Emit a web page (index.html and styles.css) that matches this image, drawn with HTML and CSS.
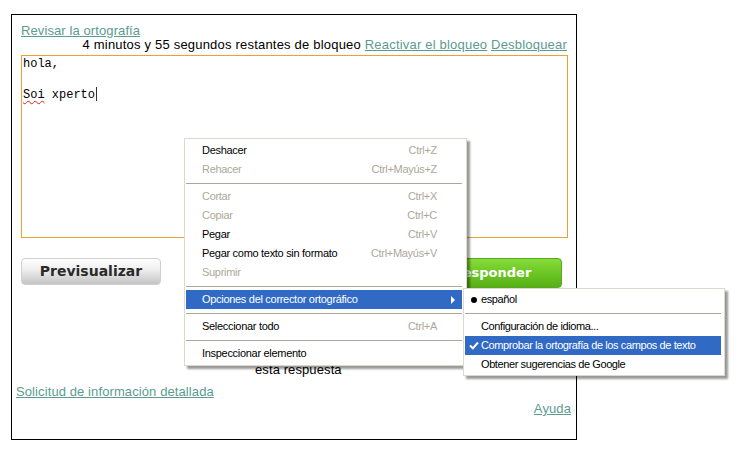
FILE: index.html
```html
<!DOCTYPE html>
<html lang="es">
<head>
<meta charset="utf-8">
<title>Responder</title>
<link rel="stylesheet" href="styles.css">
</head>
<body>
<div class="frame">
  <div class="row1"><a class="lnk" href="#">Revisar la ortografía</a></div>
  <div class="row2">4 minutos y 55 segundos restantes de bloqueo <a class="lnk" href="#">Reactivar el bloqueo</a> <a class="lnk" href="#">Desbloquear</a></div>
  <div class="textarea"><div>hola,</div><div>&nbsp;</div><div><span class="misspelled">Soi</span> xperto<span class="caret"></span></div></div>
  <div class="buttons">
    <div class="btn btn-gray">Previsualizar</div>
    <div class="btn btn-green">Responder</div>
  </div>
  <div class="note">esta respuesta</div>
  <div class="row-sol"><a class="lnk" href="#">Solicitud de información detallada</a></div>
  <div class="row-help"><a class="lnk" href="#">Ayuda</a></div>
</div>

<div class="menu main-menu">
  <div class="item"><span>Deshacer</span><span class="sc">Ctrl+Z</span></div>
  <div class="item dis"><span>Rehacer</span><span class="sc">Ctrl+Mayús+Z</span></div>
  <div class="sep"></div>
  <div class="item dis"><span>Cortar</span><span class="sc">Ctrl+X</span></div>
  <div class="item dis"><span>Copiar</span><span class="sc">Ctrl+C</span></div>
  <div class="item"><span>Pegar</span><span class="sc">Ctrl+V</span></div>
  <div class="item"><span>Pegar como texto sin formato</span><span class="sc">Ctrl+Mayús+V</span></div>
  <div class="item dis"><span>Suprimir</span></div>
  <div class="sep"></div>
  <div class="item hl"><span>Opciones del corrector ortográfico</span><span class="arrow"></span></div>
  <div class="sep"></div>
  <div class="item"><span>Seleccionar todo</span><span class="sc">Ctrl+A</span></div>
  <div class="sep"></div>
  <div class="item"><span>Inspeccionar elemento</span></div>
</div>

<div class="menu sub-menu">
  <div class="item"><span class="mark"><span class="dot"></span></span><span>español</span></div>
  <div class="sep"></div>
  <div class="item"><span class="mark"></span><span>Configuración de idioma...</span></div>
  <div class="item hl"><span class="mark"><svg width="10" height="9" viewBox="0 0 10 9"><path d="M1 4.5 L3.8 7.3 L9 1.5" fill="none" stroke="#fff" stroke-width="2"/></svg></span><span>Comprobar la ortografía de los campos de texto</span></div>
  <div class="item"><span class="mark"></span><span>Obtener sugerencias de Google</span></div>
</div>
</body>
</html>
```

FILE: styles.css
```css
html, body {
  margin: 0;
  padding: 0;
  background: #fff;
}
body {
  font-family: "Liberation Sans", Arial, sans-serif;
  font-size: 13px;
  letter-spacing: 0.1px;
  color: #000;
  width: 740px;
  height: 454px;
  overflow: hidden;
  position: relative;
}
.frame {
  margin: 14px 0 0 11px;
  width: 566px;
  height: 426px;
  box-sizing: border-box;
  border: 1px solid #000;
  padding: 9px 8px 0 9px;
}
.lnk {
  color: #5b9b91;
  text-decoration: underline;
}
.row1, .row2 {
  line-height: 14px;
  height: 14px;
}
.row2 {
  text-align: right;
  padding-right: 1px;
  letter-spacing: 0.2px;
}
.textarea {
  margin-top: 3px;
  height: 183px;
  box-sizing: border-box;
  border: 1px solid #f0a030;
  padding: 1px;
  font-family: "Liberation Mono", "Courier New", monospace;
  font-size: 12px;
  line-height: 15px;
  letter-spacing: 0;
}
.misspelled {
  text-decoration: underline wavy #e02020;
  text-decoration-thickness: 1px;
  text-underline-offset: 2px;
}
.caret {
  display: inline-block;
  width: 1px;
  height: 14px;
  background: #333;
  vertical-align: -3px;
  margin-left: 1px;
}
.buttons {
  margin-top: 20px;
  display: flex;
  justify-content: space-between;
  padding-right: 6px;
}
.btn {
  width: 140px;
  box-sizing: border-box;
  border-radius: 4px;
  font-family: "DejaVu Sans", Verdana, sans-serif;
  font-weight: bold;
  text-align: center;
  letter-spacing: 0;
}
.btn-gray {
  height: 27px;
  line-height: 25px;
  font-size: 14px;
  color: #2a2a2a;
  border: 1px solid #d0d0d0;
  background: linear-gradient(#ffffff, #f0f0f0 40%, #c4c4c4);
}
.btn-green {
  height: 30px;
  line-height: 28px;
  font-size: 13px;
  color: #fff;
  border: 1px solid #5aa81e;
  background: linear-gradient(#86dc3a, #6cc625 50%, #58b016);
}
.note {
  margin-top: 75px;
  padding-left: 234px;
  line-height: 14px;
}
.row-sol {
  margin-top: 8px;
  margin-left: -5px;
  line-height: 14px;
}
.row-help {
  margin-top: 3px;
  margin-right: -3px;
  text-align: right;
  line-height: 14px;
}

/* context menus */
.menu {
  position: absolute;
  background: #fff;
  border: 1px solid #ddd9cc;
  box-shadow: 3px 3px 2px rgba(0, 0, 0, 0.4);
  font-family: "Liberation Sans", Tahoma, sans-serif;
  font-size: 11px;
  letter-spacing: -0.3px;
  box-sizing: border-box;
}
.main-menu {
  left: 184px;
  top: 138px;
  width: 283px;
  padding: 2px 4px 2px 1px;
}
.sub-menu {
  left: 463px;
  top: 288px;
  width: 262px;
  padding: 1px 3px 1px 1px;
  letter-spacing: -0.4px;
}
.item {
  height: 19px;
  line-height: 19px;
  display: flex;
  justify-content: space-between;
  align-items: center;
  padding: 0 25px 0 16px;
  white-space: nowrap;
}
.sub-menu .item {
  justify-content: flex-start;
  padding: 0 4px 0 1px;
}
.item.dis {
  color: #aca899;
}
.sc {
  color: #aca899;
}
.item.hl {
  background: #316ac5;
  color: #fff;
}
.main-menu .item.hl {
  padding-right: 7px;
}
.arrow {
  width: 0;
  height: 0;
  border-top: 4px solid transparent;
  border-bottom: 4px solid transparent;
  border-left: 4px solid #fff;
}
.sep {
  height: 8px;
  display: flex;
  align-items: center;
}
.sep::before {
  content: "";
  display: block;
  width: 100%;
  height: 1px;
  background: #aca899;
}
.mark {
  width: 15px;
  display: flex;
  justify-content: center;
  align-items: center;
  height: 19px;
}
.dot {
  width: 6px;
  height: 6px;
  border-radius: 50%;
  background: #000;
}
```
